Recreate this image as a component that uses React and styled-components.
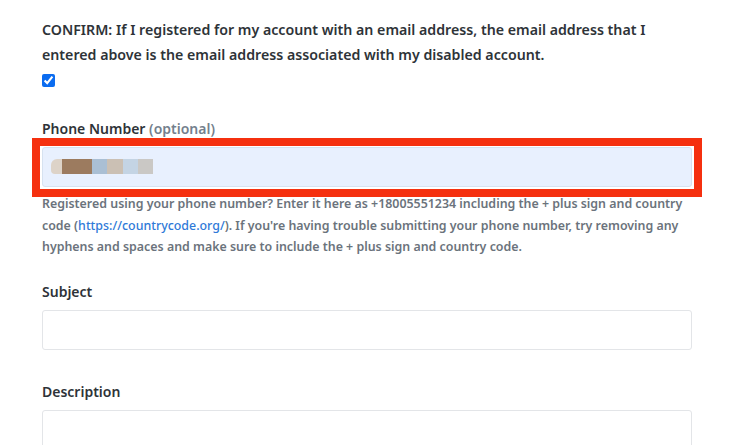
import React from 'react'
import styled, { createGlobalStyle } from 'styled-components'

const Global = createGlobalStyle`
  body {
    margin: 0;
    background: #fff;
    font-family: "Noto Sans", "Open Sans", sans-serif;
  }
`

const App = () => {
  return (
    <Main>
      <Global />
      <Field className="confirm">
        <Confirm>
          CONFIRM: If I registered for my account with an email address, the email address that I
          entered above is the email address associated with my disabled account.
        </Confirm>
        <Check type="checkbox" defaultChecked />
      </Field>

      <Field>
        <Label>Phone Number <span>(optional)</span></Label>
        <Highlight>
          <Input $filled>
            <Redacted>
              <Blot $c="#ddd3c8" $w={11} $round />
              <Blot $c="#9c7b5f" $w={30} />
              <Blot $c="#aabfd4" $w={15} />
              <Blot $c="#cbc0b4" $w={16} />
              <Blot $c="#c4d4e4" $w={15} />
              <Blot $c="#cac8c5" $w={15} />
            </Redacted>
          </Input>
        </Highlight>
        <Hint>
          Registered using your phone number? Enter it here as +18005551234 including the + plus sign and country
          code (<a href="#">https://countrycode.org/</a>). If you're having trouble submitting your phone number, try removing any
          hyphens and spaces and make sure to include the + plus sign and country code.
        </Hint>
      </Field>

      <Field>
        <Label>Subject</Label>
        <Input />
      </Field>

      <Field>
        <Label>Description</Label>
        <Input $tall />
      </Field>
    </Main>
  )
}

export default App

const Main = styled.main`
  width: 650px;
  padding: 17px 0 0 42px;
  display: flex;
  flex-direction: column;
  gap: 32px;
  color: #2e3338;
`

const Field = styled.div`
  display: flex;
  flex-direction: column;

  &.confirm{
    gap: 7px;
  }
`

const Confirm = styled.p`
  margin: 0;
  font-size: 14.2px;
  font-weight: 600;
  line-height: 25px;
  color: #2e3338;
`

const Check = styled.input`
  margin: 0;
  width: 13px;
  height: 13px;
  accent-color: #0b6cf0;
`

const Label = styled.label`
  font-size: 14px;
  font-weight: 600;
  line-height: 20px;
  margin-bottom: 8px;

  span{
    color: #747f8d;
  }
`

const Highlight = styled.div`
  position: relative;

  &::after{
    content: "";
    position: absolute;
    left: -10px;
    right: -10px;
    top: -9px;
    bottom: -10px;
    border: 8px solid #f5300f;
    pointer-events: none;
  }
`

const Input = styled.div`
  box-sizing: border-box;
  height: ${p => (p.$tall ? '40px' : '40px')};
  border: 1px solid ${p => (p.$filled ? '#d6e2f0' : '#e3e5e8')};
  border-radius: 3px;
  background: ${p => (p.$filled ? '#e8f0fe' : '#fff')};
  display: flex;
  align-items: center;
  padding-left: 8px;
`

const Redacted = styled.div`
  display: flex;
  height: 15px;
  margin-top: -2px;
`

const Blot = styled.div`
  width: ${p => p.$w}px;
  background: ${p => p.$c};
  border-radius: ${p => (p.$round ? '6px 0 0 4px' : '0')};
`

const Hint = styled.p`
  margin: 6px 0 -8px;
  font-size: 12.4px;
  font-weight: 600;
  line-height: 21.5px;
  color: #6b737c;

  a{
    color: #2f7ad8;
    font-weight: 500;
    text-decoration: none;
  }
`
